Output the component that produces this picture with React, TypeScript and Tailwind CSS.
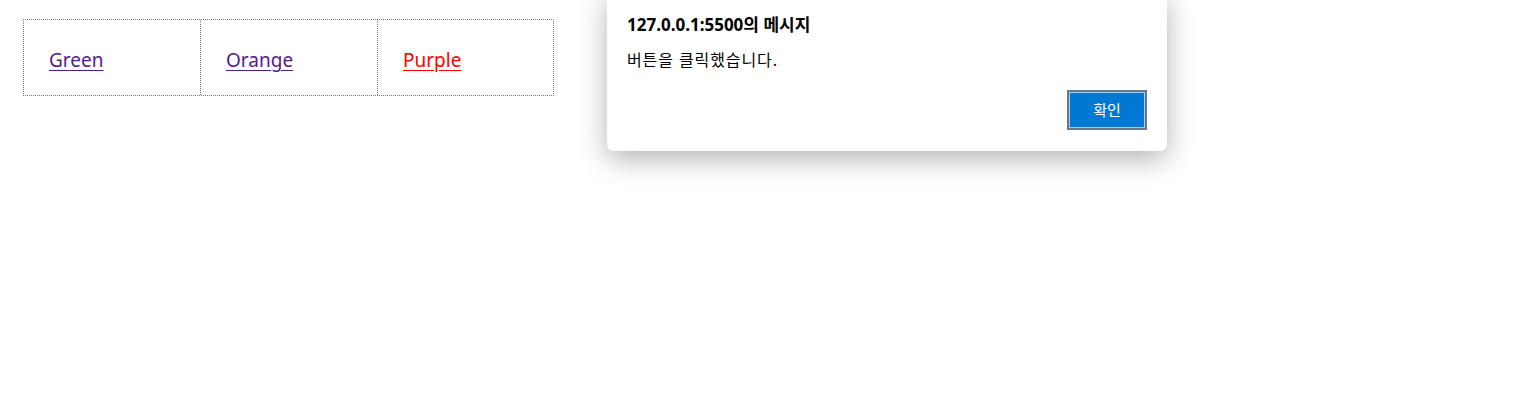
import React from "react";

const cells = [
  { label: "Green", color: "text-[#551a8b]", w: "w-[176px]" },
  { label: "Orange", color: "text-[#551a8b]", w: "w-[177px]" },
  { label: "Purple", color: "text-[#ff0000]", w: "w-[176px]" },
];

export default function App() {
  return (
    <div className="relative w-[1514px] h-[417px] bg-white overflow-hidden font-['Noto_Sans','Noto_Sans_CJK_KR',sans-serif]">
      {/* 링크 표 */}
      <div className="pt-[19px] pl-[23px]">
        <div className="flex w-fit border border-dotted border-[#777]">
          {cells.map((c, i) => (
            <div
              key={c.label}
              className={
                c.w +
                " shrink-0 h-[75px] flex items-center pt-[6px] " +
                (i > 0 ? "pl-[25px] border-l border-dotted border-[#777]" : "pl-[25px]")
              }
            >
              <a href="#" className={"text-[19px] underline underline-offset-[3px] " + c.color}>
                {c.label}
              </a>
            </div>
          ))}
        </div>
      </div>

      {/* alert 대화상자 */}
      <div className="absolute left-[607px] top-[-8px] w-[560px] h-[159px] bg-white rounded-[7px] shadow-[0_8px_28px_rgba(0,0,0,0.3)] px-[20px] pt-[21px]">
        <div className="text-[17px] font-bold text-black leading-[24px]">
          127.0.0.1:5500의 메시지
        </div>
        <div className="mt-[12px] text-[16px] tracking-[0.9px] text-black leading-[22px]">버튼을 클릭했습니다.</div>
        <div className="flex justify-end mt-[19px]">
          <button className="w-[80px] h-[40px] border-2 border-[#6c7784] bg-[#0078d4] text-white text-[15px] shadow-[inset_0_0_0_1px_#9fcdf5]">
            확인
          </button>
        </div>
      </div>
    </div>
  );
}
